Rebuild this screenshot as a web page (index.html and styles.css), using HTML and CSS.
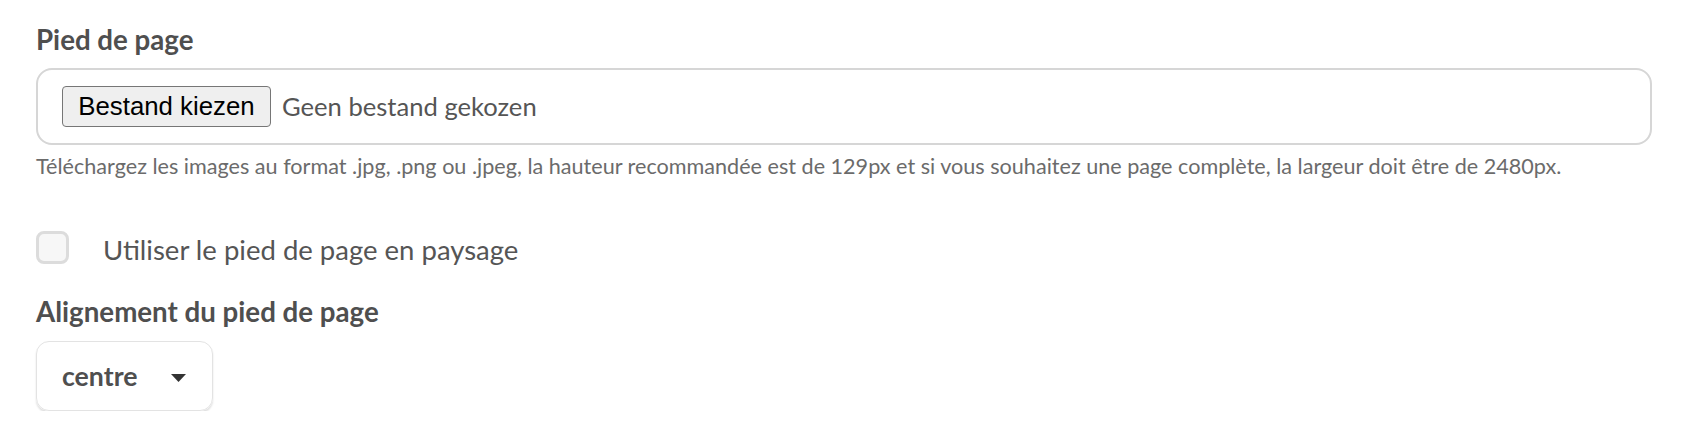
FILE: index.html
```html
<!DOCTYPE html>
<html lang="fr">
<head>
<meta charset="utf-8">
<title>Pied de page</title>
<link rel="stylesheet" href="styles.css">
</head>
<body>
<div class="page">
  <div class="field-title">Pied de page</div>
  <div class="file-box">
    <span class="file-btn">Bestand kiezen</span>
    <span class="file-name">Geen bestand gekozen</span>
  </div>
  <div class="help">Téléchargez les images au format .jpg, .png ou .jpeg, la hauteur recommandée est de 129px et si vous souhaitez une page complète, la largeur doit être de 2480px.</div>
  <label class="check-row">
    <span class="checkbox"></span>
    <span class="check-label">Utiliser le pied de page en paysage</span>
  </label>
  <div class="field-title second">Alignement du pied de page</div>
  <div class="select">
    <span class="select-value">centre</span>
    <svg class="caret" width="15" height="8" viewBox="0 0 15 8"><path d="M0 0 H15 L7.5 8 Z" fill="#333"/></svg>
  </div>
</div>
</body>
</html>
```

FILE: styles.css
```css
html, body {
  margin: 0;
  padding: 0;
  background: #ffffff;
}

.page {
  padding: 25px 30px 0 36px;
  display: flex;
  flex-direction: column;
  align-items: flex-start;
  font-family: Lato, "Open Sans", sans-serif;
  color: #555555;
}

.field-title {
  font-size: 27.7px;
  font-weight: 700;
  line-height: 30px;
  color: #4f4f4f;
}

.file-box {
  margin-top: 12.5px;
  box-sizing: border-box;
  width: 100%;
  height: 77px;
  border: 2px solid #d6d6d6;
  border-radius: 16px;
  display: flex;
  align-items: center;
  padding-left: 24px;
  gap: 11px;
}

.file-btn {
  box-sizing: border-box;
  height: 41px;
  width: 209px;
  display: flex;
  align-items: center;
  justify-content: center;
  font-family: "Liberation Sans", Arial, sans-serif;
  font-size: 25.8px;
  color: #000;
  background: #efefef;
  border: 1.5px solid #767676;
  border-radius: 4px;
}

.file-name {
  font-size: 25.6px;
  line-height: 30px;
  color: #555555;
}

.help {
  margin-top: 8px;
  font-size: 21.6px;
  line-height: 27px;
  color: #6b6b6b;
}

.check-row {
  margin-top: 51px;
  display: flex;
  align-items: flex-start;
  gap: 34px;
}

.checkbox {
  box-sizing: border-box;
  width: 33px;
  height: 33px;
  border: 3px solid #dcdcdc;
  border-radius: 8px;
  background: #f7f7f7;
}

.check-label {
  font-size: 27.5px;
  line-height: 33px;
  margin-top: 2px;
  color: #555555;
}

.field-title.second {
  margin-top: 31.5px;
}

.select {
  margin-top: 14px;
  box-sizing: border-box;
  width: 177px;
  height: 70px;
  border: 1.5px solid #e3e3e3;
  border-radius: 13px;
  box-shadow: 0 2px 2px rgba(0, 0, 0, 0.13);
  display: flex;
  align-items: center;
  justify-content: space-between;
  padding: 0 26px 0 25px;
}

.select-value {
  font-size: 26.7px;
  font-weight: 700;
  line-height: 31px;
  color: #4f4f4f;
}

.caret {
  display: block;
  margin-top: 3px;
}
```
